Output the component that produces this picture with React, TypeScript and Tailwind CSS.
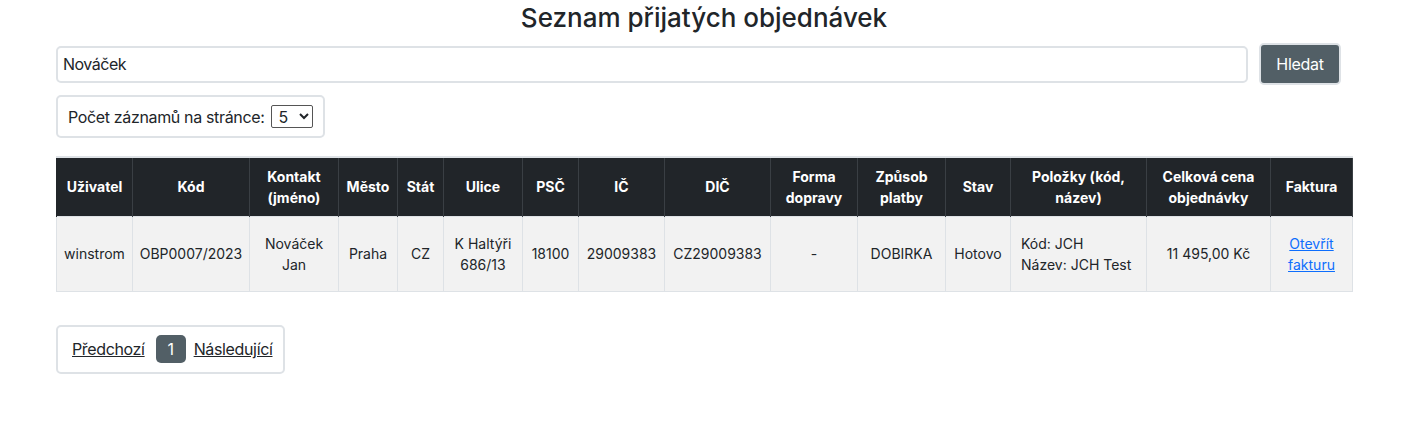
import React from "react"

const COLS = [
  { head: ["Uživatel"], w: "w-[76px]" },
  { head: ["Kód"], w: "w-[117px]" },
  { head: ["Kontakt", "(jméno)"], w: "w-[89px]" },
  { head: ["Město"], w: "w-[59px]" },
  { head: ["Stát"], w: "w-[46px]" },
  { head: ["Ulice"], w: "w-[79px]" },
  { head: ["PSČ"], w: "w-[56px]" },
  { head: ["IČ"], w: "w-[86px]" },
  { head: ["DIČ"], w: "w-[106px]" },
  { head: ["Forma", "dopravy"], w: "w-[87px]" },
  { head: ["Způsob", "platby"], w: "w-[88px]" },
  { head: ["Stav"], w: "w-[65px]" },
  { head: ["Položky (kód,", "název)"], w: "w-[136px]" },
  { head: ["Celková cena", "objednávky"], w: "w-[124px]" },
  { head: ["Faktura"], w: "w-[82px]" },
]

const ROW: React.ReactNode[] = [
  "winstrom",
  "OBP0007/2023",
  <>Nováček<br />Jan</>,
  "Praha",
  "CZ",
  <>K Haltýři<br />686/13</>,
  "18100",
  "29009383",
  "CZ29009383",
  "-",
  "DOBIRKA",
  "Hotovo",
  <div className="text-left pl-[4px]">Kód: JCH<br />Název: JCH Test</div>,
  "11 495,00 Kč",
  <a href="#" className="text-[#0d6efd] underline">Otevřít<br />fakturu</a>,
]

export default function App() {
  return (
    <div className="min-h-[425px] bg-white text-[#212529] font-['Inter',sans-serif]">
      <div className="mx-[56px] w-[1296px]">
        <h1 className="text-center text-[26px] font-medium leading-[34px] pt-[1px]">
          Seznam přijatých objednávek
        </h1>

        {/* vyhledávání */}
        <div className="flex items-center gap-[11px] mt-[8px]">
          <input
            defaultValue="Nováček"
            className="flex-none w-[1192px] h-[37px] border-2 border-[#dee2e6] rounded-[5px] px-[5px] text-[16px] tracking-[-0.5px] outline-none"
          />
          <button className="h-[42px] w-[82px] rounded-[5px] bg-[#525f66] border-2 border-[#dee2e6] text-white text-[16px] tracking-[-0.3px]">
            Hledat
          </button>
        </div>

        {/* počet záznamů */}
        <div className="inline-flex items-center gap-[7px] mt-[10px] h-[43px] px-[10px] border-2 border-[#dee2e6] rounded-[5px] text-[16px] tracking-[-0.35px]">
          <span>Počet záznamů na stránce:</span>
          <select className="h-[23px] w-[42px] border border-[#555] rounded-[2px] text-[16px] pl-[2px] bg-white">
            <option>5</option>
            <option>10</option>
            <option>20</option>
          </select>
        </div>

        {/* tabulka */}
        <table className="mt-[18px] w-[1296px] table-fixed border-collapse text-[14px] leading-[21px] border-t-2 border-[#dee2e6]">
          <colgroup>
            {COLS.map((c, i) => (
              <col key={i} className={c.w} />
            ))}
          </colgroup>
          <thead>
            <tr className="bg-[#212529] text-white h-[59px]">
              {COLS.map((c, i) => (
                <th key={i} className="font-bold text-center px-[6px] border-l border-r border-[#3a3f44] first:border-l-[#212529]">
                  {c.head.map((h, j) => (
                    <React.Fragment key={j}>
                      {j > 0 && <br />}
                      {h}
                    </React.Fragment>
                  ))}
                </th>
              ))}
            </tr>
          </thead>
          <tbody>
            <tr className="bg-[#f2f2f2] h-[75px]">
              {ROW.map((v, i) => (
                <td key={i} className="text-center px-[6px] border border-[#dee2e6]">
                  {v}
                </td>
              ))}
            </tr>
          </tbody>
        </table>

        {/* stránkování */}
        <div className="inline-flex items-center gap-[11px] mt-[33px] h-[49px] pl-[14px] pr-[10px] border-2 border-[#dee2e6] rounded-[5px] text-[16px] tracking-[-0.35px]">
          <a href="#" className="underline text-[#212529]">Předchozí</a>
          <span className="w-[30px] h-[28px] rounded-[5px] bg-[#525f66] text-white flex items-center justify-center">1</span>
          <a href="#" className="underline text-[#212529] -ml-[3px]">Následující</a>
        </div>
      </div>
    </div>
  )
}
